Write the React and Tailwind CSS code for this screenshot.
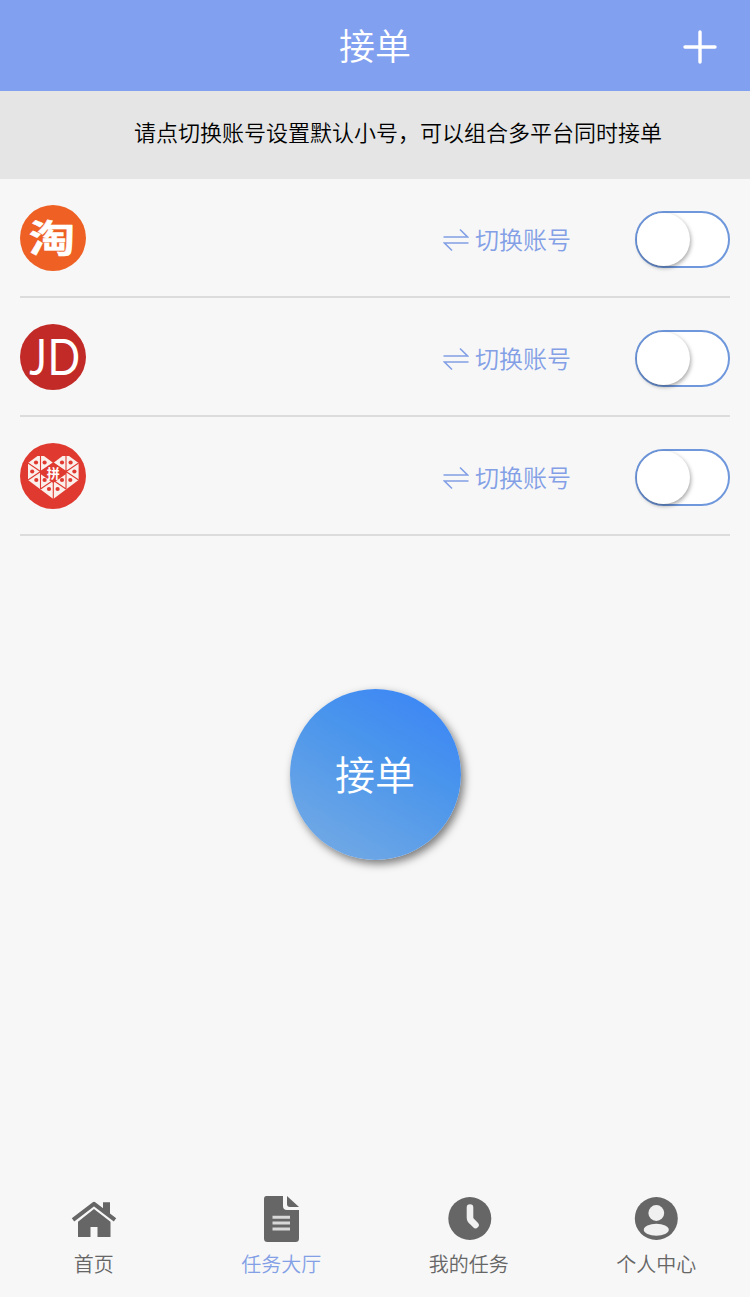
import React from "react";

function TaobaoLogo() {
  return (
    <svg viewBox="0 0 66 66" className="size-[66px]">
      <circle cx="33" cy="33" r="33" fill="#ee6023" />
      <text
        transform="translate(8.8 47.2) scale(1.22 1)"
        fontSize="38"
        fontWeight="700"
        fill="#fff"
        stroke="#fff"
        strokeWidth="0.4"
        strokeLinejoin="round"
        fontFamily="'Noto Sans CJK SC', sans-serif"
      >
        淘
      </text>
    </svg>
  );
}

function JdLogo() {
  return (
    <svg viewBox="0 0 66 66" className="size-[66px]">
      <circle cx="33" cy="33" r="33" fill="#c22a27" />
      <g fill="#fff" fontFamily="Lato, sans-serif" fontSize="50">
        <text transform="translate(9.2 51) scale(0.84 1)">J</text>
        <text transform="translate(27.5 51) scale(0.86 1)">D</text>
      </g>
    </svg>
  );
}

function PddLogo() {
  const dots = [
    [16, 19.5], [12.2, 28.5], [16.3, 37], [24.6, 19.5], [24.6, 37], [29, 46],
    [50.6, 19.5], [54.4, 28.5], [50.3, 37], [42, 19.5], [42, 37], [37.6, 46],
  ];
  return (
    <svg viewBox="0 0 66 66" className="size-[66px]">
      <circle cx="33" cy="33" r="33" fill="#e03a30" />
      <path
        d="M8 20 L17.5 13 H24 L33.3 20 L42.5 13 H49 L58.6 20 V37 L33.3 56 L8 37Z"
        fill="#fbefec"
      />
      <path
        d="M20.5 12 V46 M46 12 V46 M33.3 37 V56 M8 20 L46 46 M58.6 20 L20.5 46 M8 37 L33.3 20 L58.6 37"
        stroke="#e03a30"
        strokeWidth="1.1"
        fill="none"
      />
      <g fill="#e03a30">
        {dots.map(([x, y]) => (
          <circle key={`${x}-${y}`} cx={x} cy={y} r="2.1" />
        ))}
        <path d="M33.3 19.5 L46 28.5 V31 L33.3 40 L20.5 31 V28.5Z" />
      </g>
      <text
        x="33.3"
        y="35"
        textAnchor="middle"
        fontSize="13"
        fontWeight="700"
        fill="#fff"
        fontFamily="'Noto Sans CJK SC', sans-serif"
      >
        拼
      </text>
    </svg>
  );
}

function SwapIcon() {
  return (
    <svg viewBox="0 0 26 24" className="h-6 w-[26px]" fill="none" stroke="#83a0e6" strokeWidth="1.6">
      <path d="M0.5 9 H24.5 L17 1.5 M25.5 15 H1.5 L9 22.5" />
    </svg>
  );
}

function PlatformRow({ logo }) {
  return (
    <li className="flex h-[119px] items-center border-b-2 border-[#dcdcdc]">
      {logo}
      <button className="ml-auto flex items-center gap-1.5 pt-1 text-2xl font-[350] text-[#83a0e6]">
        <SwapIcon />
        <span className="-mt-0.5">切换账号</span>
      </button>
      <button
        role="switch"
        aria-checked="false"
        aria-label="开关"
        className="mt-1 ml-16 flex h-[57px] w-[95px] rounded-full border-2 border-[#6e97dc] bg-white"
      >
        <span className="size-[53px] rounded-full bg-white shadow-[1px_2px_4px_rgba(0,0,0,0.35)]" />
      </button>
    </li>
  );
}

function HomeIcon() {
  return (
    <svg viewBox="0 0 48 48" className="size-12" fill="#666">
      <path d="M8 26.8 L24 14 L40.5 26.8 V42 H27.5 V32 H20.5 V42 H8Z" />
      <path d="M33 7.5 H40 V20 L33 14.5Z" />
      <path d="M3 25.5 L24 9.5 L45 25.5" fill="none" stroke="#f7f7f7" strokeWidth="6.5" />
      <path d="M33 7.5 H40 V19.5 L33 14.5Z" />
      <path d="M3 24.8 L24 8.8 L45 24.8" fill="none" stroke="#666" strokeWidth="4" strokeLinejoin="round" />
    </svg>
  );
}

function DocumentIcon() {
  return (
    <svg viewBox="0 0 48 48" className="size-12" fill="#666">
      <path d="M9.5 1 H26 V11 Q26 15 30 15 H42 V43.5 Q42 47 38.5 47 H10.5 Q7 47 7 43.5 V4 Q7 1 9.5 1Z" />
      <path d="M30 1 L42 12 H33 Q30 12 30 9Z" />
      <path d="M15.5 22.3 H33 M15.5 28.1 H33 M15.5 33.9 H33" stroke="#d8d8d8" strokeWidth="3" />
    </svg>
  );
}

function ClockIcon() {
  return (
    <svg viewBox="0 0 48 48" className="size-12">
      <circle cx="24.8" cy="23.5" r="21.5" fill="#666" />
      <path
        d="M25 12.5 V22.5 Q25 25 27 26.5 L30.5 30"
        fill="none"
        stroke="#f0f0f0"
        strokeWidth="6.6"
        strokeLinecap="round"
      />
    </svg>
  );
}

function UserIcon() {
  return (
    <svg viewBox="0 0 48 48" className="size-12">
      <circle cx="24.3" cy="23.5" r="21.5" fill="#666" />
      <circle cx="24.3" cy="18" r="7.9" fill="#f0f0f0" />
      <ellipse cx="24.3" cy="34.7" rx="12.5" ry="6" fill="#f0f0f0" />
    </svg>
  );
}

function Tab({ icon, label, active }) {
  return (
    <a className={`flex flex-1 flex-col items-center text-xl font-[350] ${active ? "text-[#83a0e6]" : "text-[#666]"}`}>
      {icon}
      <span className="mt-[7px]">{label}</span>
    </a>
  );
}

export default function App() {
  return (
    <div
      lang="zh-CN"
      className="flex h-[1297px] w-[750px] flex-col bg-[#f7f7f7] font-['Noto_Sans_CJK_SC',sans-serif]"
    >
      <header className="grid h-[91px] shrink-0 grid-cols-3 items-center bg-[#82a0f0] text-white">
        <h1 className="col-start-2 pb-1 text-center text-4xl font-[350]">接单</h1>
        <button aria-label="添加" className="mt-0.5 mr-[33px] justify-self-end">
          <svg viewBox="0 0 34 34" className="size-[34px]" stroke="#fff" strokeWidth="3.4" strokeLinecap="round">
            <path d="M17 2 V32 M2 17 H32" />
          </svg>
        </button>
      </header>

      <p className="flex h-[88px] shrink-0 items-center bg-[#e5e5e5] pb-[7px] pl-[134px] text-[22px] font-[350] text-black">
        请点切换账号设置默认小号，可以组合多平台同时接单
      </p>

      <ul className="px-5">
        <PlatformRow logo={<TaobaoLogo />} />
        <PlatformRow logo={<JdLogo />} />
        <PlatformRow logo={<PddLogo />} />
      </ul>

      <main className="flex flex-1 justify-center pt-[153px]">
        <button className="size-[171px] rounded-full bg-linear-[30deg,#74aae4_5%,#4a95ec_60%,#3d87f5_90%] pb-1 text-[40px] font-[350] text-white shadow-[3px_4px_8px_rgba(0,0,0,0.5)]">
          接单
        </button>
      </main>

      <nav className="flex h-[102px] shrink-0">
        <Tab icon={<HomeIcon />} label="首页" />
        <Tab icon={<DocumentIcon />} label="任务大厅" active />
        <Tab icon={<ClockIcon />} label="我的任务" />
        <Tab icon={<UserIcon />} label="个人中心" />
      </nav>
    </div>
  );
}
